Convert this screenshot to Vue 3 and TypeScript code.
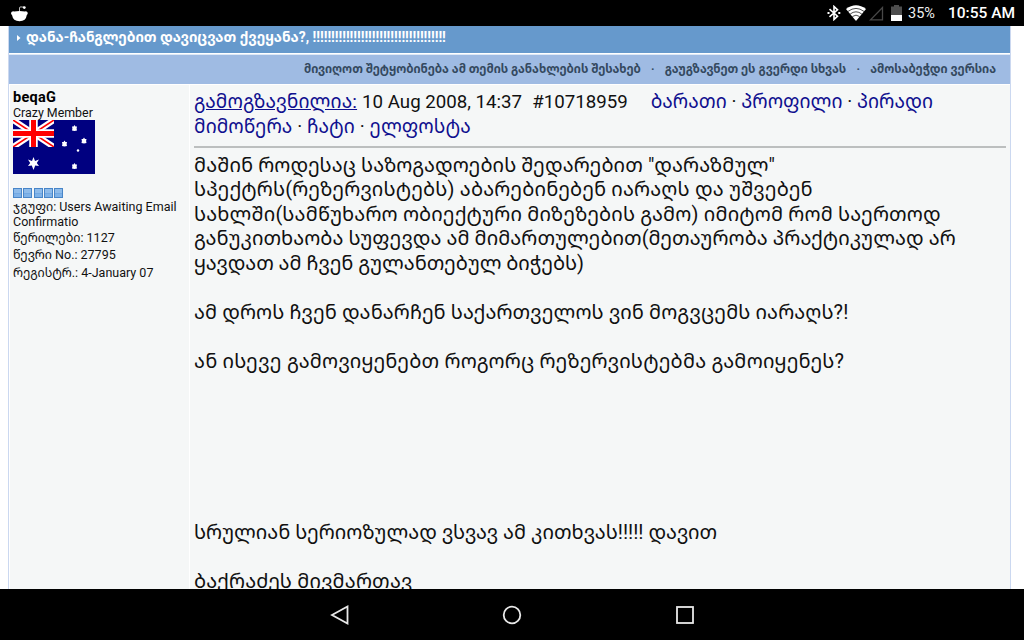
<script setup lang="ts">
// track is the letter spacing of the line, in px
type Line = { text: string; track?: number };

const actions = [
  'მივიღოთ შეტყობინება ამ თემის განახლების შესახებ',
  'გაუგზავნეთ ეს გვერდი სხვას',
  'ამოსაბეჭდი ვერსია',
];

const details: string[] = [
  'ჯგუფი: Users Awaiting Email',
  'Confirmatio',
  'წერილები: 1127',
  'წევრი No.: 27795',
  'რეგისტრ.: 4-January 07',
];

const lines: Line[] = [
  { text: 'მაშინ როდესაც საზოგადოების შედარებით "დარაზმულ"', track: 0.07 },
  { text: 'სპექტრს(რეზერვისტებს) აბარებინებენ იარაღს და უშვებენ', track: 0.15 },
  { text: 'სახლში(სამწუხარო ობიექტური მიზეზების გამო) იმიტომ რომ საერთოდ', track: 0.14 },
  { text: 'განუკითხაობა სუფევდა ამ მიმართულებით(მეთაურობა პრაქტიკულად არ', track: 0.03 },
  { text: 'ყავდათ ამ ჩვენ გულანთებულ ბიჭებს)', track: -0.07 },
  { text: '' },
  { text: 'ამ დროს ჩვენ დანარჩენ საქართველოს ვინ მოგვცემს იარაღს?!', track: 0.07 },
  { text: '' },
  { text: 'ან ისევე გამოვიყენებთ როგორც რეზერვისტებმა გამოიყენეს?', track: 0.18 },
  { text: '' },
  { text: '' },
  { text: '' },
  { text: '' },
  { text: '' },
  { text: '' },
  { text: 'სრულიან სერიოზულად ვსვავ ამ კითხვას!!!!! დავით' },
  { text: '' },
  { text: 'ბაქრაძეს მივმართავ', track: 0.16 },
];
</script>

<template>
  <div class="screen">
    <header class="status">
      <svg class="alien" width="20" height="20" viewBox="0 0 20 20">
        <path d="M1 9Q1.5 7 4 7.4Q9.5 6.6 15 7.4Q17.3 7 17.8 9Q17.6 10.5 16.8 11Q16 17.2 9.5 17.2Q3 17.2 2 11Q1 10.5 1 9Z" fill="#fff" />
        <path d="M9.5 7V4Q9.5 2.7 11 2.9L14 3.2" fill="none" stroke="#bbb" />
        <circle cx="14.3" cy="3.6" r="1.4" fill="#fff" />
      </svg>
      <div class="tray">
        <svg width="14" height="16" viewBox="0 0 14 16" fill="none" stroke="#fff" stroke-width="1.6">
          <path d="M2.5 4.2L10.5 11.2L7 14.5V1.5L10.5 4.8L2.5 11.8" />
          <path d="M.5 8H2.5M11.3 8H13.3" stroke-width="2" />
        </svg>
        <svg class="wifi" width="20" height="16" viewBox="0 0 20 16">
          <path d="M0 4Q10-3.5 20 4L10 16Z" fill="#fff" />
          <path d="M2 6.4Q10 .4 18 6.4M4.2 9Q10 4.6 15.8 9M6.4 11.5Q10 8.8 13.6 11.5" fill="none" stroke="#000" stroke-width=".7" />
        </svg>
        <svg class="signal" width="15" height="15" viewBox="0 0 15 15">
          <path d="M1.5 13.8H13.5V1.5Z" fill="none" stroke="#484848" stroke-width="1.3" />
        </svg>
        <svg class="battery" width="11" height="16" viewBox="0 0 11 16">
          <path d="M0 1.5H3V0H8V1.5H11V16H0Z" fill="#4d4d4d" />
          <path d="M0 10H11V16H0Z" fill="#fff" />
        </svg>
        <span class="percent">35%</span>
        <span class="clock">10:55 AM</span>
      </div>
    </header>

    <main class="page">
      <div class="topic">
        <div class="heading">
          <svg class="arrow" width="4" height="6" viewBox="0 0 4 6"><path d="M0 0L3.5 3L0 6Z" fill="#fff" /></svg>
          <span class="headingText">დანა-ჩანგლებით დავიცვათ ქვეყანა?, <span class="bangs">!!!!!!!!!!!!!!!!!!!!!!!!!!!!!!!!!!!!</span></span>
        </div>
        <nav class="actions">
          <template v-for="(a, i) in actions" :key="a">
            <span v-if="i" class="sep">·</span>
            <a class="action">{{ a }}</a>
          </template>
        </nav>
        <div class="post">
          <aside class="author">
            <div class="name">beqaG</div>
            <div class="rank">Crazy Member</div>
            <svg class="flag" width="82" height="54" viewBox="0 0 82 54">
              <rect width="82" height="54" fill="#000080" />
              <svg width="41" height="27" viewBox="0 0 41 27">
                <path d="M0 0L41 27M41 0L0 27" stroke="#fff" stroke-width="6" />
                <path d="M0 0L41 27M41 0L0 27" stroke="#f00" stroke-width="1.6" />
                <path d="M20.5 0V27M0 13.5H41" stroke="#fff" stroke-width="8.5" />
                <path d="M20.5 0V27M0 13.5H41" stroke="#f00" stroke-width="5" />
              </svg>
              <g fill="#fff">
                <path d="M20.5 37L22 41L26 39.5L23.8 43L26 46L22.2 45.5L20.5 50L18.8 45.5L15 46L17.2 43L15 39.5L19 41Z" />
                <path d="M61.5 5L62.5 6.5L64 6.5L63.6 8.5L64 10.5L61.5 11L59 10.5L59.4 8.5L59 6.5L60.5 6.5Z" />
                <path d="M51.5 20.5L52.5 22L54 22L53.6 24L54 26L51.5 26.5L49 26L49.4 24L49 22L50.5 22Z" />
                <path d="M71 17.5L72 19L73.5 19L73.1 21L73.5 23L71 23.5L68.5 23L68.9 21L68.5 19L70 19Z" />
                <path d="M61.5 43L62.5 44.5L64 44.5L63.6 46.5L64 48.5L61.5 49L59 48.5L59.4 46.5L59 44.5L60.5 44.5Z" />
                <circle cx="65" cy="30.5" r="1.2" />
              </g>
            </svg>
            <div class="pips">
              <i v-for="n in 5" :key="n" class="pip"></i>
            </div>
            <div v-for="(d, i) in details" :key="d" class="detail" :class="{ wrapped: i === 1 }">{{ d }}</div>
          </aside>
          <article class="message">
            <div class="meta">
              <div><a class="posted">გამოგზავნილია:</a><span class="date">10 Aug 2008, 14:37</span><span class="number">#10718959</span><a>ბარათი</a> · <a>პროფილი</a> · <a>პირადი</a></div>
              <div class="more"><a>მიმოწერა</a> · <a>ჩატი</a> · <a>ელფოსტა</a></div>
            </div>
            <div class="body">
              <div
                v-for="(l, i) in lines"
                :key="i"
                class="line"
                :style="{ letterSpacing: `${l.track ?? 0}px` }"
              >{{ l.text }}</div>
            </div>
          </article>
        </div>
      </div>
    </main>

    <footer class="navbar">
      <svg class="back" width="20" height="22" viewBox="0 0 20 22"><path d="M2 11L17.5 2.5V19.5Z" fill="none" stroke="#e8e8e8" stroke-width="1.8" /></svg>
      <svg width="20" height="20" viewBox="0 0 20 20"><circle cx="10" cy="10" r="8.3" fill="none" stroke="#e8e8e8" stroke-width="1.8" /></svg>
      <svg width="20" height="20" viewBox="0 0 20 20"><rect x="2" y="2" width="16" height="16" fill="none" stroke="#e8e8e8" stroke-width="1.8" /></svg>
    </footer>
  </div>
</template>

<style>
body { margin:0; }
</style>

<style scoped>
.screen{
  width:1024px;
  height:640px;
  overflow:hidden;
  display:flex;
  flex-direction:column;
  background:#000;
  color:#111;
  font-family:Roboto, "Noto Sans Georgian", "Noto Sans", "DejaVu Sans", sans-serif;
}

.status{
  flex:none;
  height:26px;
  box-sizing:border-box;
  padding:0 9px 0 10px;
  display:flex;
  align-items:center;
  justify-content:space-between;
  color:#fff;
}
.alien{ margin-top:2px; }
.tray{ display:flex; align-items:center; }
.wifi{ margin-left:5px; }
.signal{ margin-left:3px; }
.battery{ margin-left:7px; }
.percent{ margin-left:6px; font-size:14.5px; color:#eee; }
.clock{ margin-left:13px; font-size:15.5px; font-weight:500; }

.page{
  flex:none;
  height:563px;
  overflow:hidden;
  background:#fff;
}
.topic{
  width:1001px;
  height:563px;
  margin-left:8px;
  border-left:1px solid #cbd8f0;
  border-right:1px solid #cbd8f0;
}

.heading{
  height:27px;
  display:flex;
  align-items:center;
  background:#6699cc;
  color:#fff;
  white-space:nowrap;
}
.arrow{ margin:0 5px 3px 8px; }
.headingText{ font-size:13.95px; font-weight:700; line-height:20px; margin-bottom:6px; }
.bangs{ letter-spacing:-0.07px; }

.actions{
  height:28px;
  margin-top:1px;
  border-top:1px solid #dfe9f6;
  padding:0 14px 2px 0;
  box-sizing:content-box;
  display:flex;
  align-items:center;
  justify-content:flex-end;
  background:#9fbbe3;
  color:#34495f;
  font-size:11.7px;
  font-weight:700;
  white-space:nowrap;
}
.actions{ height:27px; }
.sep{ width:24px; text-align:center; }

.post{
  height:505px;
  display:flex;
  gap:1px;
  padding:1px 0 0 1px;
}
.author{
  width:179px;
  height:504px;
  box-sizing:border-box;
  padding:4px 0 0 3px;
  background:#f5f7f7;
  font-size:12.5px;
  white-space:nowrap;
}
.name{ font-size:14.5px; font-weight:700; line-height:17px; letter-spacing:0.3px; color:#000; }
.rank{ font-size:12.4px; line-height:14px; }
.flag{ display:block; }
.pips{ display:flex; gap:1.25px; margin:14px 0 0; }
.pip{
  width:9px;
  height:10px;
  box-sizing:border-box;
  border:1px solid #4785c8;
  background:linear-gradient(#8dbbea 45%, #4d8fd4 45%, #7eb2e8 60%);
}
.detail{ line-height:17.2px; }
.wrapped{ line-height:14px; }

.message{
  flex:1;
  height:504px;
  box-sizing:border-box;
  padding:4px 4px 0 4px;
  background:#f5f7f7;
  font-size:20px;
  white-space:nowrap;
  overflow:hidden;
}
.meta{
  height:57px;
  font-size:19.2px;
  line-height:25px;
  border-bottom:2px solid #bcbfbf;
}
.meta a{ color:#10108f; }
.meta .posted{ text-decoration:underline; letter-spacing:0.12px; }
.more{ line-height:23px; letter-spacing:0.04px; }
.date,
.number{ font-size:18.7px; }
.date{ margin-left:5px; }
.number{ margin:0 23px 0 10px; }
.body{ padding-top:5px; }
.line{ height:24.47px; line-height:24.47px; }

.navbar{
  flex:1;
  display:flex;
  align-items:center;
  justify-content:center;
  gap:153px;
}
.back{ margin-left:1px; margin-right:-1px; }
</style>
